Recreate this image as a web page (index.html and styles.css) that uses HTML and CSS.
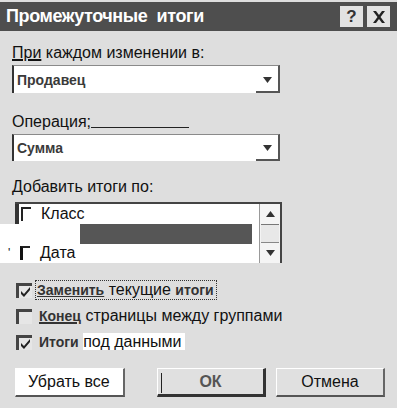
FILE: index.html
```html
<!DOCTYPE html>
<html lang="ru">
<head>
<meta charset="utf-8">
<title>Промежуточные итоги</title>
<link rel="stylesheet" href="styles.css">
</head>
<body>
<div class="dialog">
  <div class="titlebar">
    <span class="title">Промежуточные&nbsp; итоги</span>
    <div class="tb-buttons">
      <span class="tb-btn help">?</span>
      <span class="tb-btn close">
        <svg width="14" height="12" viewBox="0 0 14 12"><path d="M1 0h3l3 4 3-4h3L8.5 6 13 12h-3L7 8l-3 4H1l4.5-6z" fill="#222"/></svg>
      </span>
    </div>
  </div>
  <div class="content">
    <div class="label l1"><u>При</u> каждом изменении в:</div>
    <div class="combo c1">
      <span class="combo-text">Продавец</span>
      <span class="combo-arrow"><svg width="9" height="6" viewBox="0 0 9 6"><path d="M0 0h9L4.5 6z" fill="#333"/></svg></span>
    </div>
    <div class="label l2">Операция;<span class="scan-line"></span></div>
    <div class="combo c2">
      <span class="combo-text">Сумма</span>
      <span class="combo-arrow"><svg width="9" height="6" viewBox="0 0 9 6"><path d="M0 0h9L4.5 6z" fill="#333"/></svg></span>
    </div>
    <div class="label l3">Добавить итоги по:</div>
    <div class="listbox">
      <div class="list-items">
        <div class="row r1"><span class="lcheck"></span><span class="row-text">Класс</span></div>
        <div class="row r2"><span class="sel-bar"></span></div>
        <div class="row r3"><span class="lmark">'</span><span class="lcheck"></span><span class="row-text">Дата</span></div>
      </div>
      <div class="scrollbar">
        <span class="sb-btn"><svg width="9" height="6" viewBox="0 0 9 6"><path d="M0 6h9L4.5 0z" fill="#333"/></svg></span>
        <span class="sb-thumb"></span>
        <span class="sb-btn"><svg width="9" height="6" viewBox="0 0 9 6"><path d="M0 0h9L4.5 6z" fill="#333"/></svg></span>
      </div>
    </div>
    <div class="check-row cr1">
      <span class="cbox"><svg width="11" height="10" viewBox="0 0 11 10"><path d="M1 4l3 3 6-7v3L4 10 1 7z" fill="#222"/></svg></span>
      <span class="focus"><b class="u-first">Заменить</b> текущие <b>итоги</b></span>
    </div>
    <div class="check-row cr2">
      <span class="cbox"></span>
      <span class="ctext"><b class="ul">Конец</b> страницы между группами</span>
    </div>
    <div class="check-row cr3">
      <span class="cbox"><svg width="11" height="10" viewBox="0 0 11 10"><path d="M1 4l3 3 6-7v3L4 10 1 7z" fill="#222"/></svg></span>
      <span class="ctext"><b>Итоги</b> <span class="white">под данными</span></span>
    </div>
    <div class="buttons">
      <button class="btn b1">Убрать все<span class="bar"></span></button>
      <button class="btn b2 default"><span class="bar left"></span>ОК</button>
      <button class="btn b3">Отмена</button>
    </div>
  </div>
</div>
</body>
</html>
```
FILE: styles.css
```css
* { box-sizing: border-box; }
html, body { margin: 0; padding: 0; }
body {
  width: 397px;
  height: 408px;
  background: #dedede;
  font-family: "Liberation Sans", Arial, sans-serif;
  color: #111;
  overflow: hidden;
}
.dialog {
  width: 397px;
  height: 408px;
  background: #dedede;
  padding-top: 2px;
  display: flex;
  flex-direction: column;
}
.titlebar {
  height: 29px;
  background: #4e4e4e;
  display: flex;
  align-items: center;
  justify-content: space-between;
  padding: 0 7px 0 6px;
}
.title {
  color: #fff;
  font-weight: bold;
  font-size: 18px;
  letter-spacing: -0.4px;
}
.tb-buttons {
  display: flex;
  gap: 4px;
}
.tb-btn {
  width: 23px;
  height: 21px;
  background: #e2e2e2;
  display: flex;
  align-items: center;
  justify-content: center;
  font-weight: bold;
  font-size: 17px;
  color: #333;
}
.content {
  padding: 0 12px;
  display: flex;
  flex-direction: column;
}
.label {
  font-size: 16px;
  line-height: 18px;
  height: 18px;
}
.label u { text-decoration-thickness: 2px; }
.l1 { margin-top: 13px; }
.l2 { margin-top: 20px; display: flex; align-items: flex-end; }
.l3 { margin-top: 17px; }
.scan-line {
  display: inline-block;
  width: 98px;
  height: 1px;
  background: #222;
  margin-bottom: 3px;
}
.combo {
  width: 268px;
  background: #fff;
  border-top: 1px solid #8a8a8a;
  border-left: 2px solid #333;
  border-right: 2px solid #555;
  display: flex;
  align-items: center;
  justify-content: space-between;
  padding: 0 6px 0 3px;
  position: relative;
}
.combo::after {
  content: "";
  position: absolute;
  right: -2px;
  bottom: 0;
  width: 24px;
  height: 2px;
  background: #555;
}
.c1 { margin-top: 3px; height: 28px; }
.c2 { margin-top: 3px; height: 27px; }
.combo-text {
  font-size: 14px;
  font-weight: bold;
  color: #3a3a3a;
}
.combo-arrow { display: flex; }
.listbox {
  margin-top: 6px;
  margin-left: 3px;
  width: 267px;
  height: 61px;
  display: flex;
  background: #fff;
  border-top: 2px solid #444;
}
.list-items {
  flex: 1;
  display: flex;
  flex-direction: column;
}
.row {
  height: 20px;
  display: flex;
  align-items: center;
  font-size: 16px;
}
.r1 { border-left: 4px solid #333; padding-left: 2px; }
.r2, .r3 {
  margin-left: -15px;
  background: #fff;
}
.lcheck {
  width: 10px;
  height: 14px;
  border-top: 2px solid #222;
  border-left: 2px solid #222;
  margin-right: 10px;
}
.lmark {
  font-size: 12px;
  width: 10px;
  margin-left: 8px;
}
.r3 .lcheck { margin-left: 2px; border-left: 3px solid #111; }
.sel-bar {
  margin-left: 80px;
  width: 172px;
  height: 20px;
  background: #565656;
}
.scrollbar {
  width: 23px;
  display: flex;
  flex-direction: column;
  border-left: 1px solid #999;
  border-right: 2px solid #444;
  background: #f4f4f4;
}
.sb-btn {
  height: 20px;
  display: flex;
  align-items: center;
  justify-content: center;
}
.sb-thumb {
  height: 20px;
  border-top: 1px solid #777;
  border-bottom: 1px solid #888;
  margin: 0 1px;
  background: #e8e8e8;
}
.check-row {
  display: flex;
  align-items: center;
  height: 20px;
  font-size: 16px;
}
.cr1 { margin-top: 17px; }
.cr2, .cr3 { margin-top: 6px; }
.cbox {
  width: 16px;
  height: 15px;
  margin-left: 4px;
  margin-right: 4px;
  border-top: 3px solid #444;
  border-left: 3px solid #444;
  background: #e6e6e6;
  display: flex;
  align-items: center;
  justify-content: center;
}
.check-row b { font-size: 14px; color: #333; }
.focus {
  outline: 1px dotted #333;
  padding: 0 2px 0 1px;
}
.u-first { text-decoration: underline; text-decoration-thickness: 1px; }
.ul { text-decoration: underline; text-decoration-thickness: 2px; }
.ctext { padding-left: 3px; }
.white { background: #fff; padding-right: 3px; }
.buttons {
  margin-top: 16px;
  display: flex;
  padding-left: 3px;
}
.btn {
  width: 110px;
  height: 29px;
  background: #e0e0e0;
  border: none;
  border-top: 1px solid #fff;
  border-left: 1px solid #fff;
  border-right: 2px solid #666;
  border-bottom: 2px solid #555;
  font-family: "Liberation Sans", Arial, sans-serif;
  font-size: 16px;
  color: #111;
  padding: 0;
  white-space: nowrap;
  display: flex;
  align-items: center;
  justify-content: center;
  position: relative;
}
.b1 { background: #fff; justify-content: flex-start; padding-left: 12px; }
.bar {
  display: inline-block;
  width: 1px;
  height: 20px;
  background: #222;
  margin-left: 14px;
}
.bar.left { position: absolute; left: 3px; top: 4px; margin: 0; }
.b2 {
  margin-left: 32px;
  font-weight: bold;
  color: #555;
  border-right: 3px solid #333;
  border-bottom: 3px solid #333;
}
.b3 { margin-left: 10px; }
```
